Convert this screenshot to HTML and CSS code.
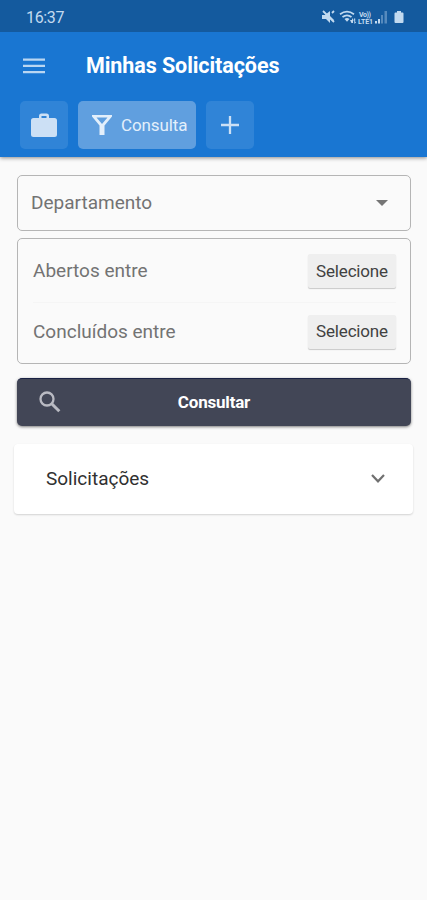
FILE: index.html
```html
<!DOCTYPE html>
<html lang="pt-BR">
<head>
<meta charset="utf-8">
<meta name="viewport" content="width=device-width">
<title>Minhas Solicitações</title>
<link rel="stylesheet" href="styles.css">
</head>
<body>
<header class="header">
  <div class="status">
    <span class="clock">16:37</span>
    <svg class="status-icons" width="84" height="16" viewBox="0 0 84 16" fill="currentColor">
      <path d="M1 6h3l5-4v5l4 4-1 1-3-2v4L5 10H1z"/>
      <path d="M2 2l11 11M11 4l2-2" fill="none" stroke="currentColor" stroke-width="1.800"/>
      <g fill="none" stroke="currentColor" stroke-width="1.700"><path d="M19 5.200q7-5.200 14 0M21.500 8q4.500-3.400 9 0"/></g>
      <path d="M23.500 10q2.500-2 5 0L26 12.800z"/>
      <path d="M29 11h2V9l2 2.500h-1V14h-1.500zM33 9.500h1.200V13h1L33.500 15z"/>
      <text x="38" y="7.500" class="net" textLength="12">Vo))</text>
      <text x="37" y="14.500" class="net" textLength="15">LTE1</text>
      <path d="M54 12h2v2.500h-2zM57 10h2v4.500h-2z"/>
      <path d="M60 6h2v8.500h-2zM63.500 2H66v12.500h-2.500z" opacity=".38"/>
      <path d="M76 2h4v1.500h1.500q1 0 1 1V13q0 1-1 1h-7q-1 0-1-1V4.500q0-1 1-1H76z"/>
    </svg>
  </div>
  <div class="titlebar">
    <svg class="menu" width="22" height="16" viewBox="0 0 22 16" fill="currentColor"><path d="M0 .5h22v2.300H0zM0 6.800h22v2.300H0zM0 13h22v2.300H0z"/></svg>
    <h1>Minhas Solicitações</h1>
  </div>
  <nav class="tabs">
    <button class="tab"><svg width="26" height="25" viewBox="0 0 26 25" fill="currentColor"><path fill-rule="evenodd" d="M8 5V3q0-2.500 2.500-2.500h5Q18 .5 18 3v2h5.500Q26 5 26 7.500v14q0 2.500-2.500 2.500h-21Q0 24 0 21.500v-14Q0 5 2.500 5zm2.500 0h5V3h-5z"/></svg></button>
    <button class="tab active"><svg width="20" height="22" viewBox="0 0 20 22" fill="currentColor"><path fill-rule="evenodd" d="M0 1h20v1.500l-7.500 9V21h-5v-9.500L0 2.500zM4.500 3.500L10 10l5.500-6.500z"/></svg><span>Consulta</span></button>
    <button class="tab"><svg width="20" height="20" viewBox="0 0 20 20"><path d="M1 10h18M10 1v18" fill="none" stroke="currentColor" stroke-width="2.300"/></svg></button>
  </nav>
</header>
<main>
  <div class="select"><span class="label department">Departamento</span><svg width="12" height="6" viewBox="0 0 12 6"><path d="M0 0h12L6 6z" fill="#757575"/></svg></div>
  <section class="dates">
    <div class="date-row"><span class="label opened">Abertos entre</span><button class="pick">Selecione</button></div>
    <div class="date-row"><span class="label closed">Concluídos entre</span><button class="pick">Selecione</button></div>
  </section>
  <button class="search">
    <svg width="22" height="22" viewBox="0 0 22 22" fill="none" stroke="currentColor"><circle cx="8" cy="8" r="6.500" stroke-width="2.300"/><path d="M13 13l7.300 7.300" stroke-width="3"/></svg>
    <span>Consultar</span>
  </button>
  <section class="card"><span>Solicitações</span><svg width="14" height="9" viewBox="0 0 14 9"><path d="M1 1l6 6.300L13 1" fill="none" stroke="#707070" stroke-width="2.200"/></svg></section>
</main>
</body>
</html>
```
FILE: styles.css
```css
* { box-sizing: border-box; }
body { margin: 0; min-height: 900px; background: #fafafa; font-family: Roboto, sans-serif; }
button { border: 0; padding: 0; font: inherit; color: inherit; }
svg { display: block; flex: none; }
.header { height: 157px; background: #1976d2; box-shadow: 0 1px 4px rgba(0,0,0,.45); color: #fff; }
.status { height: 32px; padding: 2px 22px 0 26px; display: flex; align-items: center; justify-content: space-between; background: #145a9e; color: #c2daf0; }
.clock { font-size: 16px; letter-spacing: -.35px; }
.net { font-size: 7px; font-weight: 700; }
.titlebar { height: 69px; padding: 0 23px 2px; display: flex; align-items: center; }
.menu { color: #b9d6f2; }
h1 { margin: 0 0 0 41px; font-size: 21.500px; line-height: 28px; font-weight: 700; letter-spacing: -.08px; white-space: nowrap; }
.tabs { display: flex; gap: 10px; padding-left: 20px; }
.tab { width: 48px; height: 48px; border-radius: 5px; background: #3084d7; color: #cce0f5; display: flex; align-items: center; justify-content: center; }
.tab.active { width: 118px; padding-left: 14px; justify-content: flex-start; background: #609fdf; color: #e3effb; gap: 9px; font-size: 17px; letter-spacing: -.12px; }
main { padding: 18px 16px 0 17px; }
.select { height: 56px; border: 1px solid #b5b5b5; border-radius: 5px; padding: 0 22px 2px 13px; display: flex; align-items: center; justify-content: space-between; }
.select svg { margin-top: 2px; }
.label { font-size: 19px; color: #737373; }
.dates { height: 126px; margin-top: 7px; border: 1px solid #b5b5b5; border-radius: 5px; padding: 1px 14px 0 15px; }
.date-row { height: 62px; display: flex; align-items: center; justify-content: space-between; }
.date-row .label { padding-bottom: 1px; }
.date-row + .date-row { border-top: 1px solid #f5f5f5; padding-bottom: 4px; }
.pick { width: 88px; height: 34px; padding-bottom: 1px; border-radius: 2px; background: #efefef; box-shadow: 0 1px 1px rgba(0,0,0,.2); color: #414141; font-size: 17px; letter-spacing: -.18px; }
.search { width: 100%; height: 48px; margin-top: 14px; padding: 0 22px 2px; border-radius: 5px; background: #424656; border-top: 1px solid #192144; box-shadow: 0 1px 3px rgba(0,0,0,.5); color: #fff; display: grid; grid-template-columns: 22px 1fr 22px; align-items: center; font-size: 17px; font-weight: 700; letter-spacing: -.2px; }
.search svg { color: #b9bac2; }
.card { height: 70px; margin: 18px -2px 0 -3px; padding: 0 28px 1px 32px; border-radius: 4px; background: #fff; box-shadow: 0 1px 2px rgba(0,0,0,.16); display: flex; align-items: center; justify-content: space-between; font-size: 19px; color: #303030; }
```
